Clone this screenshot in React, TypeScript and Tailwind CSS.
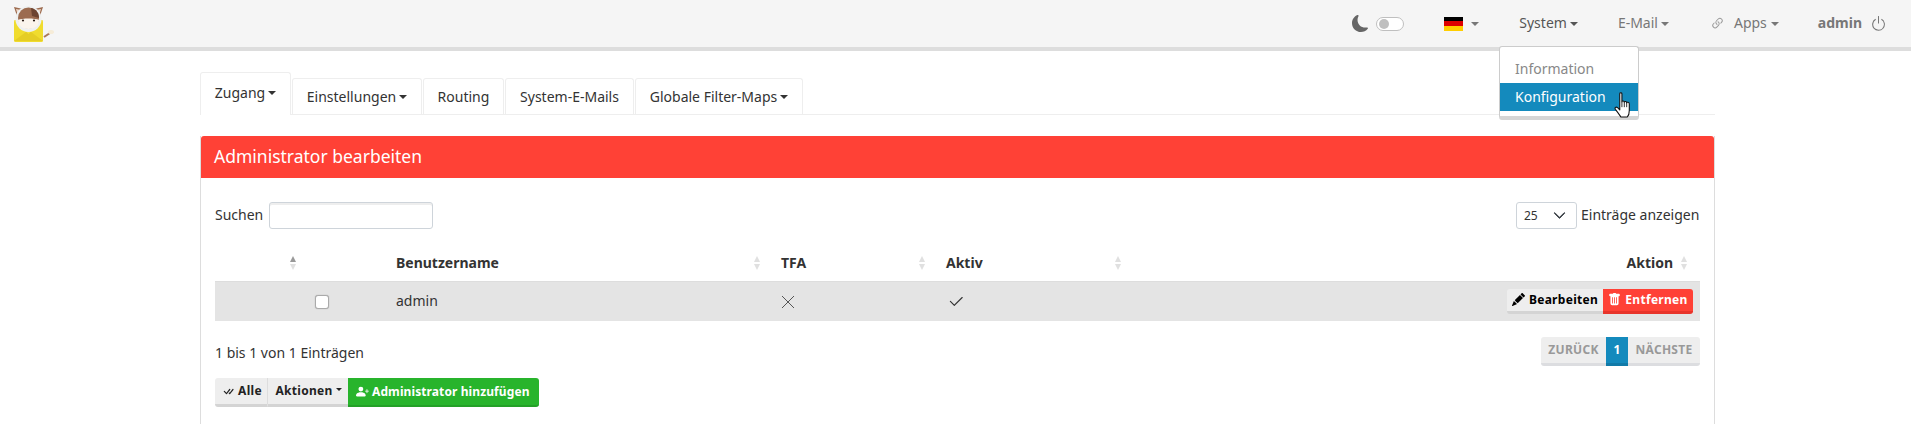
import { BsCheck2, BsCheckAll, BsChevronDown, BsLink45Deg, BsMoonFill, BsPencilFill, BsPersonPlusFill, BsPower, BsTrashFill } from "react-icons/bs";

function Caret({ className = "" }: { className?: string }) {
  return <span className={`inline-block w-0 h-0 border-x-[4px] border-x-transparent border-t-[4px] border-t-current ${className}`} />;
}

function SortIcon() {
  return (
    <span className="flex flex-col gap-[2px] items-center">
      <span className="w-0 h-0 border-x-[3px] border-x-transparent border-b-[6px] border-b-[#e0e0e0]" />
      <span className="w-0 h-0 border-x-[3px] border-x-transparent border-t-[6px] border-t-[#e0e0e0]" />
    </span>
  );
}

function Logo() {
  return (
    <svg width="40" height="38" viewBox="0 0 40 38" className="block">
      <path d="M30 31 L36 27" stroke="#a9785a" strokeWidth="2" />
      <ellipse cx="37" cy="26" rx="3" ry="2" fill="#f6ecd8" />
      <rect x="0" y="14" width="29" height="22" rx="1.5" fill="#f0dc2e" />
      <path d="M0 35 L14.5 24 L29 35 Z" fill="#e5cd25" />
      <path d="M0 14 L14.5 28 L29 14 Z" fill="#f5e33f" />
      <path d="M3 10 L0 1 L9 3 Z" fill="#9c6b4f" />
      <path d="M26 10 L29 1 L20 3 Z" fill="#9c6b4f" />
      <path d="M3.5 8 L2 3 L7 4 Z" fill="#f0d8c8" />
      <path d="M25.5 8 L27 3 L22 4 Z" fill="#f0d8c8" />
      <circle cx="14.5" cy="13" r="13" fill="#eef0f0" />
      <circle cx="14.5" cy="12" r="10.5" fill="#9c6b4f" />
      <path d="M17 2 C23 3 25 8 25 12 L18 10 Z" fill="#6d4431" />
      <path d="M4 14 C8 12 21 12 25 14 C25 20 20 23 14.5 23 C9 23 4 20 4 14 Z" fill="#fbf4ec" />
      <circle cx="9" cy="14.5" r="1.1" fill="#2a1c16" />
      <circle cx="20" cy="14.5" r="1.1" fill="#2a1c16" />
    </svg>
  );
}

function HandCursor() {
  return (
    <svg width="18" height="26" viewBox="0 0 16 24" className="block">
      <path d="M5 1.5 C5 .5 7 .5 7 1.5 V9 C7 8 9.2 8 9.2 9.5 C9.2 8.5 11.4 8.5 11.4 10 C11.4 9.2 13.8 9.2 13.8 11 V17 C13.8 20 12.5 22.5 12 23 H6 C5 21.5 3 18.5 1 16 C0 14.5 1.5 13.2 3 14.5 L5 16.5 Z" fill="#fff" stroke="#111" strokeWidth="1" strokeLinejoin="round" />
      <path d="M7 9 V14 M9.2 9.5 V14 M11.4 10 V14" stroke="#111" strokeWidth="0.8" />
    </svg>
  );
}

function Navbar() {
  return (
    <nav className="relative h-[51px] bg-[#f5f5f5] border-b-4 border-[#dddddd] flex items-center text-[14px] text-[#777777]">
      <div className="ml-[14px] mt-[2px] mr-auto"><Logo /></div>
      <BsMoonFill className="text-[17px] text-[#666666] mr-[7px]" />
      <span className="w-[28px] h-[14px] rounded-full border border-[#bfbfbf] bg-white flex items-center pl-[2px] mr-[40px]">
        <span className="w-[10px] h-[10px] rounded-full bg-[#bfbfbf]" />
      </span>
      <span className="w-[19px] h-[14px] flex flex-col mr-[8px]">
        <span className="flex-1 bg-black" />
        <span className="flex-1 bg-[#dd0000]" />
        <span className="flex-1 bg-[#ffce00]" />
      </span>
      <Caret className="mr-[40px]" />
      <span className="text-[#555555] mr-[3px] mb-[2px]">System</span>
      <Caret className="text-[#555555] mr-[40px]" />
      <span className="mr-[3px] mb-[2px]">E-Mail</span>
      <Caret className="mr-[41px]" />
      <BsLink45Deg className="text-[15px] text-[#999999] mr-[9px]" />
      <span className="mr-[4px] mb-[2px]">Apps</span>
      <Caret className="mr-[39px]" />
      <span className="font-bold mr-[8px] mb-[2px]">admin</span>
      <BsPower className="text-[17px] mr-[24px]" />
      <div className="absolute left-[1499px] top-[46px] w-[140px] h-[74px] bg-white border border-[#cccccc] border-b-4 border-b-[#d5d5d5] rounded-[3px] pt-[8px] z-10">
        <div className="h-[28px] leading-[27px] pl-[15px] text-[#888888]">Information</div>
        <div className="h-[28px] leading-[28px] pl-[15px] bg-[#148abd] text-white">Konfiguration</div>
      </div>
      <div className="absolute left-[1614px] top-[92px] z-20"><HandCursor /></div>
    </nav>
  );
}

function Tabs() {
  const tab = "h-[36px] border border-b-0 border-[#eeeeee] rounded-t-[3px] flex items-center justify-center gap-[3px]";
  return (
    <div className="flex items-end h-[43px] border-b border-[#eeeeee] text-[14px] text-[#333333]">
      <div className="w-[91px] h-[43px] border border-b-0 border-[#eeeeee] rounded-t-[3px] bg-white flex justify-center gap-[3px] pt-[10px] -mb-px">
        <span className="leading-[19px]">Zugang</span>
        <Caret className="mt-[8px]" />
      </div>
      <div className={`${tab} w-[130px] ml-[1px]`}>Einstellungen<Caret /></div>
      <div className={`${tab} w-[81px] ml-[1px]`}>Routing</div>
      <div className={`${tab} w-[129px] ml-[1px]`}>System-E-Mails</div>
      <div className={`${tab} w-[168px] ml-[1px]`}>Globale Filter-Maps<Caret /></div>
    </div>
  );
}

function AdminTable() {
  return (
    <table className="w-[1485px] table-fixed border-collapse text-[14px] text-[#333333] mt-[18px]">
      <colgroup>
        <col className="w-[86px]" />
        <col className="w-[84px]" />
        <col className="w-[385px]" />
        <col className="w-[165px]" />
        <col className="w-[195px]" />
        <col className="w-[570px]" />
      </colgroup>
      <thead>
        <tr className="h-[34px] font-bold">
          <th className="pr-[5px] pb-[2px]"><div className="flex justify-end"><span className="flex flex-col gap-[2px] items-center"><span className="w-0 h-0 border-x-[3px] border-x-transparent border-b-[6px] border-b-[#999999]" /><span className="w-0 h-0 border-x-[3px] border-x-transparent border-t-[6px] border-t-[#e0e0e0]" /></span></div></th>
          <th />
          <th className="pl-[11px] pr-[10px] pb-[2px]"><div className="flex justify-between items-center">Benutzername<SortIcon /></div></th>
          <th className="pl-[11px] pr-[10px] pb-[2px]"><div className="flex justify-between items-center">TFA<SortIcon /></div></th>
          <th className="pl-[11px] pr-[9px] pb-[2px]"><div className="flex justify-between items-center">Aktiv<SortIcon /></div></th>
          <th className="pr-[13px] pb-[2px]"><div className="flex justify-end items-center gap-[8px]">Aktion<SortIcon /></div></th>
        </tr>
      </thead>
      <tbody>
        <tr className="h-[40px] bg-[#e4e4e4] border-t border-[#dddddd]">
          <td />
          <td className="pl-[14px]"><div className="w-[14px] h-[14px] mt-[2px] bg-white border border-[#aaaaaa] rounded-[3px] shadow-[0_0_1px_#999999]" /></td>
          <td className="pl-[11px] pb-[2px]">admin</td>
          <td className="pl-[11px]">
            <svg width="14" height="14" viewBox="0 0 14 14" className="block mt-[1px]"><path d="M1 1 L13 13 M13 1 L1 13" stroke="#555555" strokeWidth="1" fill="none" /></svg>
          </td>
          <td className="pl-[12px]"><BsCheck2 className="text-[18px] mt-[1px] text-[#333333]" /></td>
          <td className="pr-[7px]">
            <div className="flex justify-end text-[12px] font-bold tracking-[0.3px]">
              <span className="w-[96px] h-[25px] bg-[#eeeeee] border-b-[3px] border-[#d4d4d4] rounded-l-[3px] flex items-center justify-center gap-[4px] text-black"><BsPencilFill className="text-[13px]" />Bearbeiten</span>
              <span className="w-[90px] h-[25px] bg-[#ff4136] border-b-[3px] border-[#e8352b] rounded-r-[3px] flex items-center justify-center gap-[4px] text-white"><BsTrashFill className="text-[13px]" />Entfernen</span>
            </div>
          </td>
        </tr>
      </tbody>
    </table>
  );
}

export default function App() {
  return (
    <div className="h-[424px] overflow-hidden bg-white font-['Noto_Sans',sans-serif]">
      <Navbar />
      <main className="w-[1515px] ml-[200px] pt-[21px]">
        <Tabs />
        <section className="mt-[21px] h-[400px] border-x border-[#dddddd]">
          <h2 className="h-[42px] bg-[#ff4136] text-white text-[17.5px] font-normal leading-[41px] pl-[13px] rounded-t-[3px]">Administrator bearbeiten</h2>
          <div className="px-[14px] pt-[24px]">
            <div className="flex items-center h-[27px] text-[14px] text-[#333333]">
              <span className="mr-[6px] mb-[2px]">Suchen</span>
              <div className="w-[164px] h-[27px] bg-white border border-[#ced4da] rounded-[3px] shadow-[inset_0_2px_0_#eeeeee]" />
              <div className="ml-auto w-[61px] h-[27px] border border-[#ced4da] rounded-[3px] flex items-center justify-between pl-[7px] pr-[10px] text-[12px]">
                25
                <BsChevronDown className="text-[13px] text-[#343a40] stroke-[1px]" />
              </div>
              <span className="ml-[4px] w-[119px] mb-[2px]">Einträge anzeigen</span>
            </div>
            <AdminTable />
            <div className="flex items-center justify-between mt-[16px] h-[29px]">
              <span className="text-[14px] text-[#333333] mt-[1px]">1 bis 1 von 1 Einträgen</span>
              <div className="flex h-[29px] text-[12px] font-bold tracking-[0.3px] text-[#999999]">
                <span className="w-[65px] bg-[#eeeeee] border-b-[3px] border-[#dcdde0] rounded-l-[3px] flex items-center justify-center">ZURÜCK</span>
                <span className="w-[22px] bg-[#148abd] border-b-[3px] border-[#117aa8] text-white flex items-center justify-center">1</span>
                <span className="w-[72px] bg-[#eeeeee] border-b-[3px] border-[#dcdde0] rounded-r-[3px] flex items-center justify-center">NÄCHSTE</span>
              </div>
            </div>
            <div className="flex h-[29px] mt-[12px] text-[12px] font-bold tracking-[0.3px]">
              <span className="w-[53px] bg-[#eeeeee] border-b-[3px] border-[#d4d4d4] border-r border-r-[#dddddd] rounded-l-[3px] flex items-center justify-center gap-[3px] pl-[2px] text-[#222222]"><BsCheckAll className="text-[13px]" />Alle</span>
              <span className="w-[80px] bg-[#eeeeee] border-b-[3px] border-[#d4d4d4] flex items-center justify-center gap-[3px] pl-[1px] text-[#222222]">Aktionen<Caret className="!border-x-[3px] !border-t-[3px] mb-[3px]" /></span>
              <span className="w-[191px] bg-[#28b42c] border-b-[2px] border-[#23a027] rounded-r-[3px] flex items-center gap-[3px] pl-[8px] text-white tracking-[0.1px]"><BsPersonPlusFill className="text-[13px]" />Administrator hinzufügen</span>
            </div>
          </div>
        </section>
      </main>
    </div>
  );
}
